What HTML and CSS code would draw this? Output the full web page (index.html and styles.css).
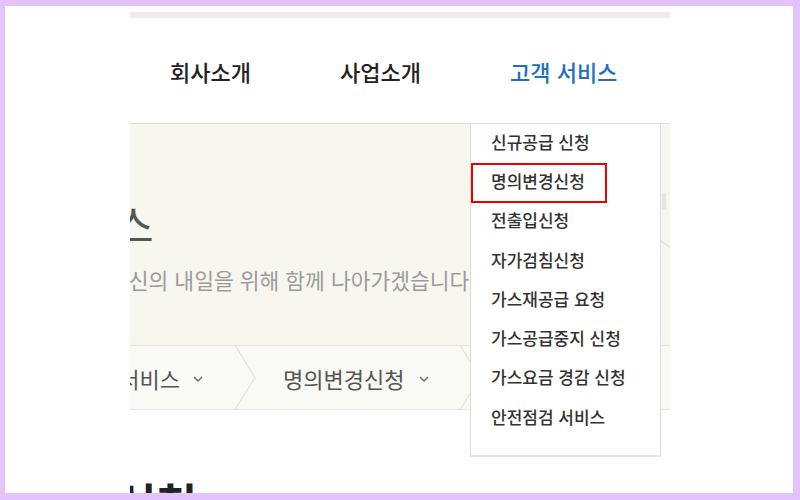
FILE: index.html
```html
<!DOCTYPE html>
<html lang="ko">
<head>
<meta charset="utf-8">
<title>고객 서비스 - 명의변경신청</title>
<link rel="stylesheet" href="styles.css">
</head>
<body>
<div class="page">
  <div class="frame">
    <div class="topbar"></div>
    <nav class="gnb">
      <a class="gnb-item">회사소개</a>
      <a class="gnb-item">사업소개</a>
      <a class="gnb-item active">고객 서비스</a>
    </nav>
    <section class="hero">
      <h1 class="hero-title">고객 서비스</h1>
      <p class="hero-sub">당신의 내일을 위해 함께 나아가겠습니다.</p>
      <div class="hero-thumb"></div>
      <svg class="hero-line" width="12" height="10" viewBox="0 0 12 10"><path d="M0 0L12 9" stroke="#e0e0da" stroke-width="1.2" fill="none"/></svg>
    </section>
    <div class="crumbs">
      <div class="crumb first">
        <span class="crumb-text">고객 서비스</span>
        <svg class="chev" width="10" height="6" viewBox="0 0 10 6"><path d="M1 1l4 4 4-4" fill="none" stroke="#666" stroke-width="1.4"/></svg>
      </div>
      <svg class="sep" width="21" height="63" viewBox="0 0 21 63"><path d="M0.5 0L20 31.5 0.5 63" fill="none" stroke="#dcdcd6" stroke-width="1"/></svg>
      <div class="crumb second">
        <span class="crumb-text">명의변경신청</span>
        <svg class="chev" width="10" height="6" viewBox="0 0 10 6"><path d="M1 1l4 4 4-4" fill="none" stroke="#666" stroke-width="1.4"/></svg>
      </div>
      <svg class="sep" width="21" height="63" viewBox="0 0 21 63"><path d="M0.5 0L20 31.5 0.5 63" fill="none" stroke="#dcdcd6" stroke-width="1"/></svg>
      <div class="crumb third">
        <span class="crumb-text">신청안내</span>
      </div>
    </div>
    <h2 class="page-title">명의변경신청</h2>

    <ul class="dropdown">
      <li class="dd-item">신규공급 신청</li>
      <li class="dd-item marked">명의변경신청</li>
      <li class="dd-item">전출입신청</li>
      <li class="dd-item">자가검침신청</li>
      <li class="dd-item">가스재공급 요청</li>
      <li class="dd-item">가스공급중지 신청</li>
      <li class="dd-item">가스요금 경감 신청</li>
      <li class="dd-item">안전점검 서비스</li>
    </ul>
  </div>
</div>
</body>
</html>
```

FILE: styles.css
```css
html, body {
  margin: 0;
  padding: 0;
  width: 800px;
  height: 500px;
  overflow: hidden;
  background: #fff;
}

.page {
  box-sizing: border-box;
  width: 800px;
  height: 500px;
  border-style: solid;
  border-color: #e4c2fb;
  border-width: 6px 7px 7px 5px;
  background: #fff;
  overflow: hidden;
  font-family: "Noto Sans CJK KR", "Noto Sans", sans-serif;
}

.frame {
  position: relative;
  width: 540px;
  height: 487px;
  margin-left: 125px;
  overflow: hidden;
}

.topbar {
  margin-top: 6px;
  height: 6px;
  background: #ececec;
}

.gnb {
  display: grid;
  grid-template-columns: repeat(3, 170px);
  height: 105px;
  padding-left: 40px;
  align-items: center;
  box-sizing: border-box;
}

.gnb-item {
  font-size: 22px;
  font-weight: 500;
  color: #222;
  white-space: nowrap;
  line-height: 30px;
}

.gnb-item.active {
  color: #1f6fc0;
}

.hero {
  position: relative;
  border-top: 1px solid #dedede;
  height: 222px;
  background: #f7f6ef;
  padding-top: 74px;
  box-sizing: border-box;
}

.hero-title {
  margin: 0 0 0 -191px;
  font-size: 44px;
  line-height: 52px;
  font-weight: 400;
  color: #555;
  white-space: nowrap;
}

.hero-sub {
  margin: 16px 0 0 -21px;
  font-size: 21.5px;
  line-height: 28px;
  color: #9b9b9b;
  white-space: nowrap;
}

.hero-thumb {
  position: absolute;
  left: 532px;
  top: 69px;
  width: 4px;
  height: 17px;
  background: #e7e6df;
}

.hero-line {
  position: absolute;
  left: 530px;
  top: 116px;
}

.crumbs {
  display: flex;
  height: 63px;
  border-top: 1px solid #e3e3e0;
  border-bottom: 1px solid #e3e3e0;
  background: #f9f9f5;
  color: #555;
  font-size: 22px;
}

.crumb {
  display: flex;
  align-items: center;
  flex-shrink: 0;
  box-sizing: border-box;
}

.crumb-text {
  white-space: nowrap;
  flex-shrink: 0;
}

.crumb.first {
  width: 105px;
  justify-content: flex-end;
  padding-right: 32px;
  gap: 13px;
}

.crumb.second {
  width: 204px;
  padding-left: 27px;
  gap: 15px;
}

.crumb.third {
  padding-left: 27px;
}

.chev {
  flex-shrink: 0;
  margin-top: 2px;
}

.sep {
  flex-shrink: 0;
  display: block;
}

.page-title {
  margin: 66px 0 0 -176px;
  font-size: 44px;
  line-height: 52px;
  font-weight: 700;
  color: #222;
  white-space: nowrap;
}

.dropdown {
  position: absolute;
  left: 340px;
  top: 117px;
  width: 191px;
  height: 334px;
  box-sizing: border-box;
  margin: 0;
  padding: 0;
  list-style: none;
  background: #fff;
  border: 1px solid #dddddd;
  border-bottom-width: 2px;
  border-bottom-color: #e6e6e6;
}

.dd-item {
  display: flex;
  align-items: center;
  height: 39.3px;
  padding-left: 20px;
  padding-bottom: 5px;
  box-sizing: border-box;
  font-size: 17px;
  color: #333;
  font-weight: 500;
  white-space: nowrap;
}

.dd-item.marked {
  width: 136px;
  box-shadow: inset 0 0 0 2px #ee0000;
}
```
